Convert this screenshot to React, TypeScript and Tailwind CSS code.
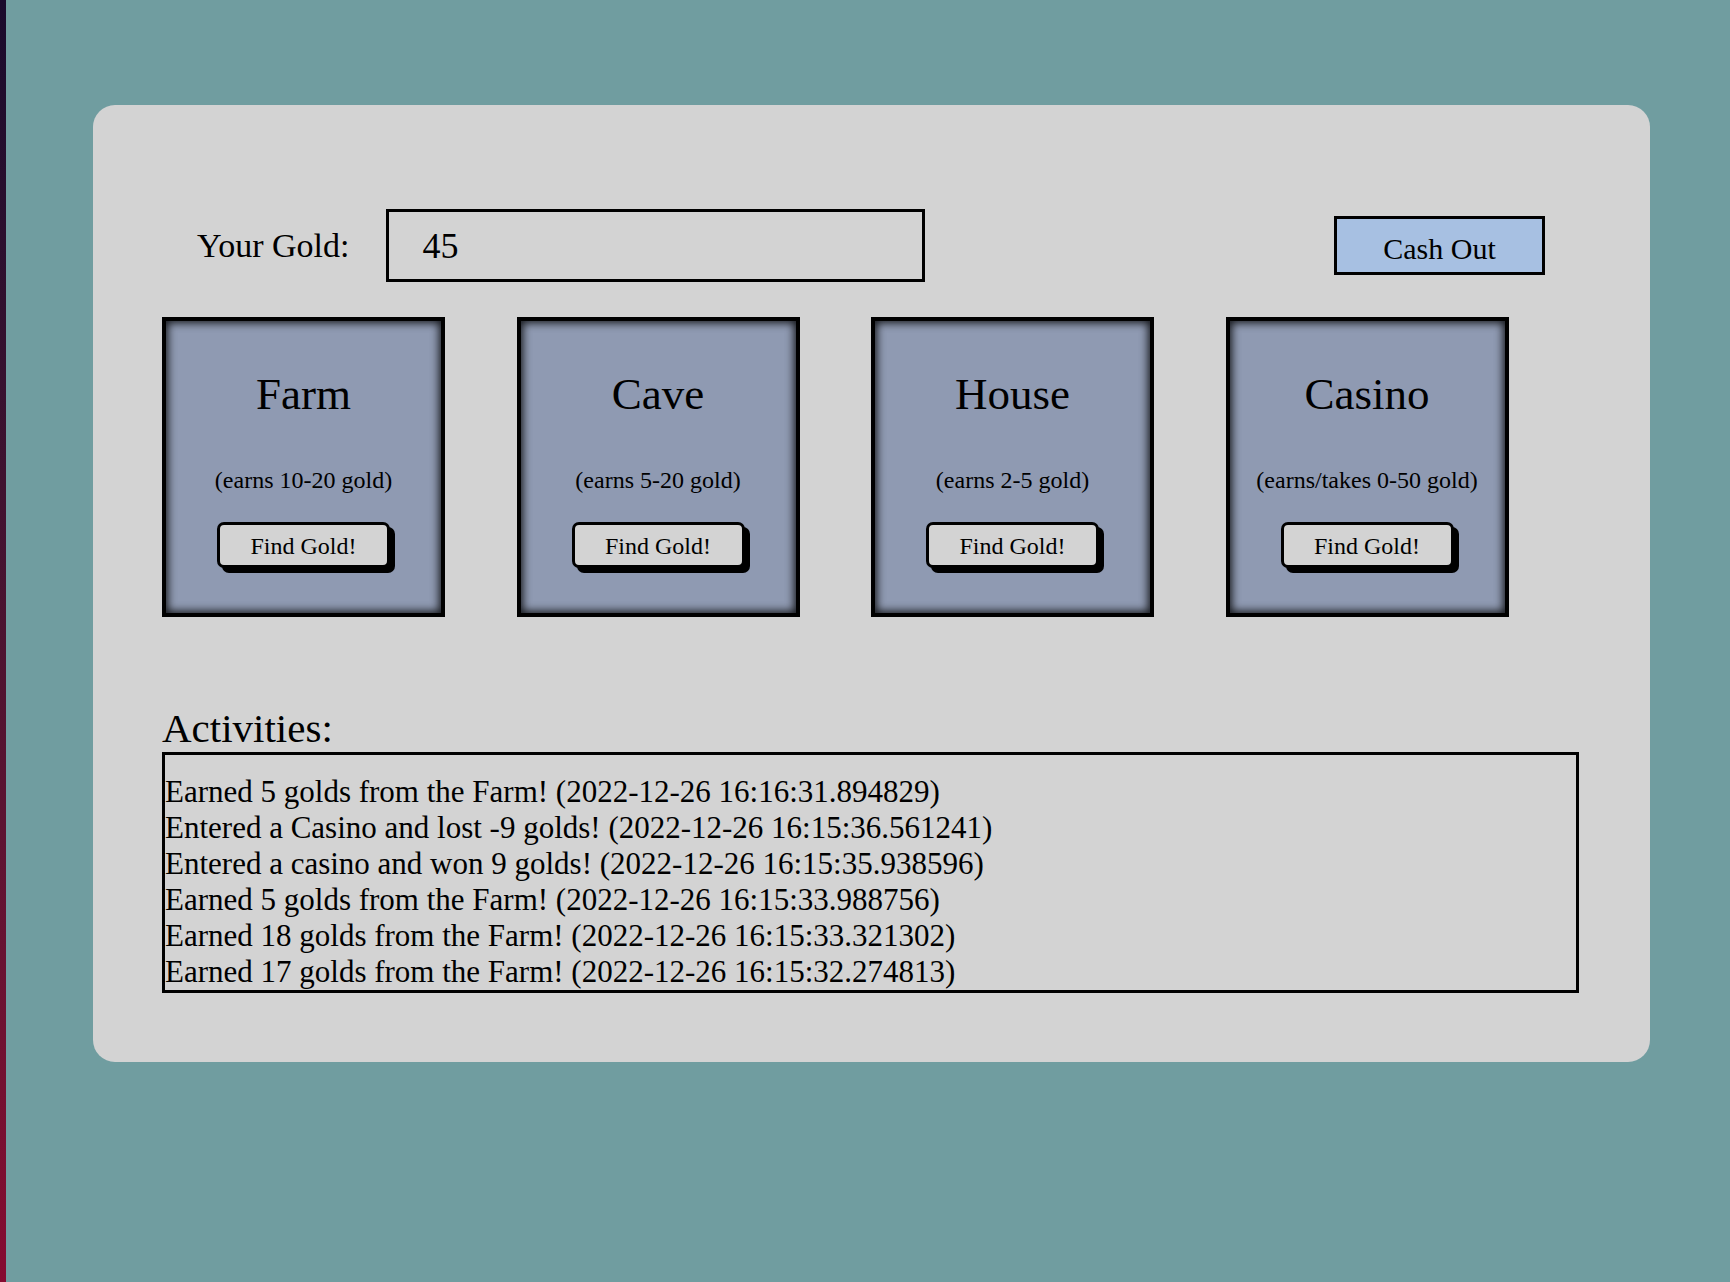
import React from "react";

const PLACES = [
  { name: "Farm", note: "(earns 10-20 gold)" },
  { name: "Cave", note: "(earns 5-20 gold)" },
  { name: "House", note: "(earns 2-5 gold)" },
  { name: "Casino", note: "(earns/takes 0-50 gold)" },
];

const ACTIVITIES = [
  "Earned 5 golds from the Farm! (2022-12-26 16:16:31.894829)",
  "Entered a Casino and lost -9 golds! (2022-12-26 16:15:36.561241)",
  "Entered a casino and won 9 golds! (2022-12-26 16:15:35.938596)",
  "Earned 5 golds from the Farm! (2022-12-26 16:15:33.988756)",
  "Earned 18 golds from the Farm! (2022-12-26 16:15:33.321302)",
  "Earned 17 golds from the Farm! (2022-12-26 16:15:32.274813)",
];

function PlaceCard({ name, note }: { name: string; note: string }) {
  return (
    <div className="w-[283px] h-[300px] border-4 border-black bg-[#8f9ab2] shadow-[inset_0_0_9px_2px_rgba(0,0,0,0.85)] flex flex-col items-center">
      <h2 className="pt-[47px] text-[45px] leading-[52px]">{name}</h2>
      <p className="mt-[46px] text-[24px] leading-[28px]">{note}</p>
      <button className="mt-[28px] w-[173px] h-[46px] border-[3px] border-black rounded-[7px] bg-[#d3d3d3] shadow-[5px_5px_0_#000] text-[24px] leading-[28px] pt-[2px]">
        Find Gold!
      </button>
    </div>
  );
}

export default function App() {
  return (
    <div
      className="min-h-screen flex bg-[#709da0] text-black"
      style={{ fontFamily: '"Liberation Serif", "Times New Roman", serif' }}
    >
      {/* left edge strip */}
      <div className="w-[6px] shrink-0 bg-gradient-to-b from-[#1a0a2c] to-[#860a30]" />

      <div className="pl-[87px] pt-[105px] pb-[222px]">
        <main className="w-[1557px] rounded-[22px] bg-[#d3d3d3] pt-[104px] pb-[69px]">
          {/* gold row */}
          <div className="flex items-center">
            <span className="ml-[104px] text-[34px]">Your Gold:</span>
            <div className="ml-[37px] w-[539px] h-[73px] border-[3px] border-black flex items-center pl-[33px] text-[36px]">
              45
            </div>
            <button className="ml-auto mr-[105px] w-[211px] h-[59px] border-[3px] border-black bg-[#a7c0e2] text-[30px] leading-[34px] pt-[6px]">
              Cash Out
            </button>
          </div>

          {/* places */}
          <div className="mt-[35px] pl-[69px] flex gap-[71.5px]">
            {PLACES.map((p) => (
              <PlaceCard key={p.name} name={p.name} note={p.note} />
            ))}
          </div>

          {/* activity log */}
          <div className="ml-[69px] w-[1417px] mt-[89px]">
            <h3 className="text-[41px] leading-[44px]">Activities:</h3>
            <div className="mt-[2px] border-[3px] border-black pt-[19px] text-[31px] leading-[36px]">
              {ACTIVITIES.map((a, i) => (
                <p key={i} className="whitespace-nowrap">
                  {a}
                </p>
              ))}
            </div>
          </div>
        </main>
      </div>
    </div>
  );
}
